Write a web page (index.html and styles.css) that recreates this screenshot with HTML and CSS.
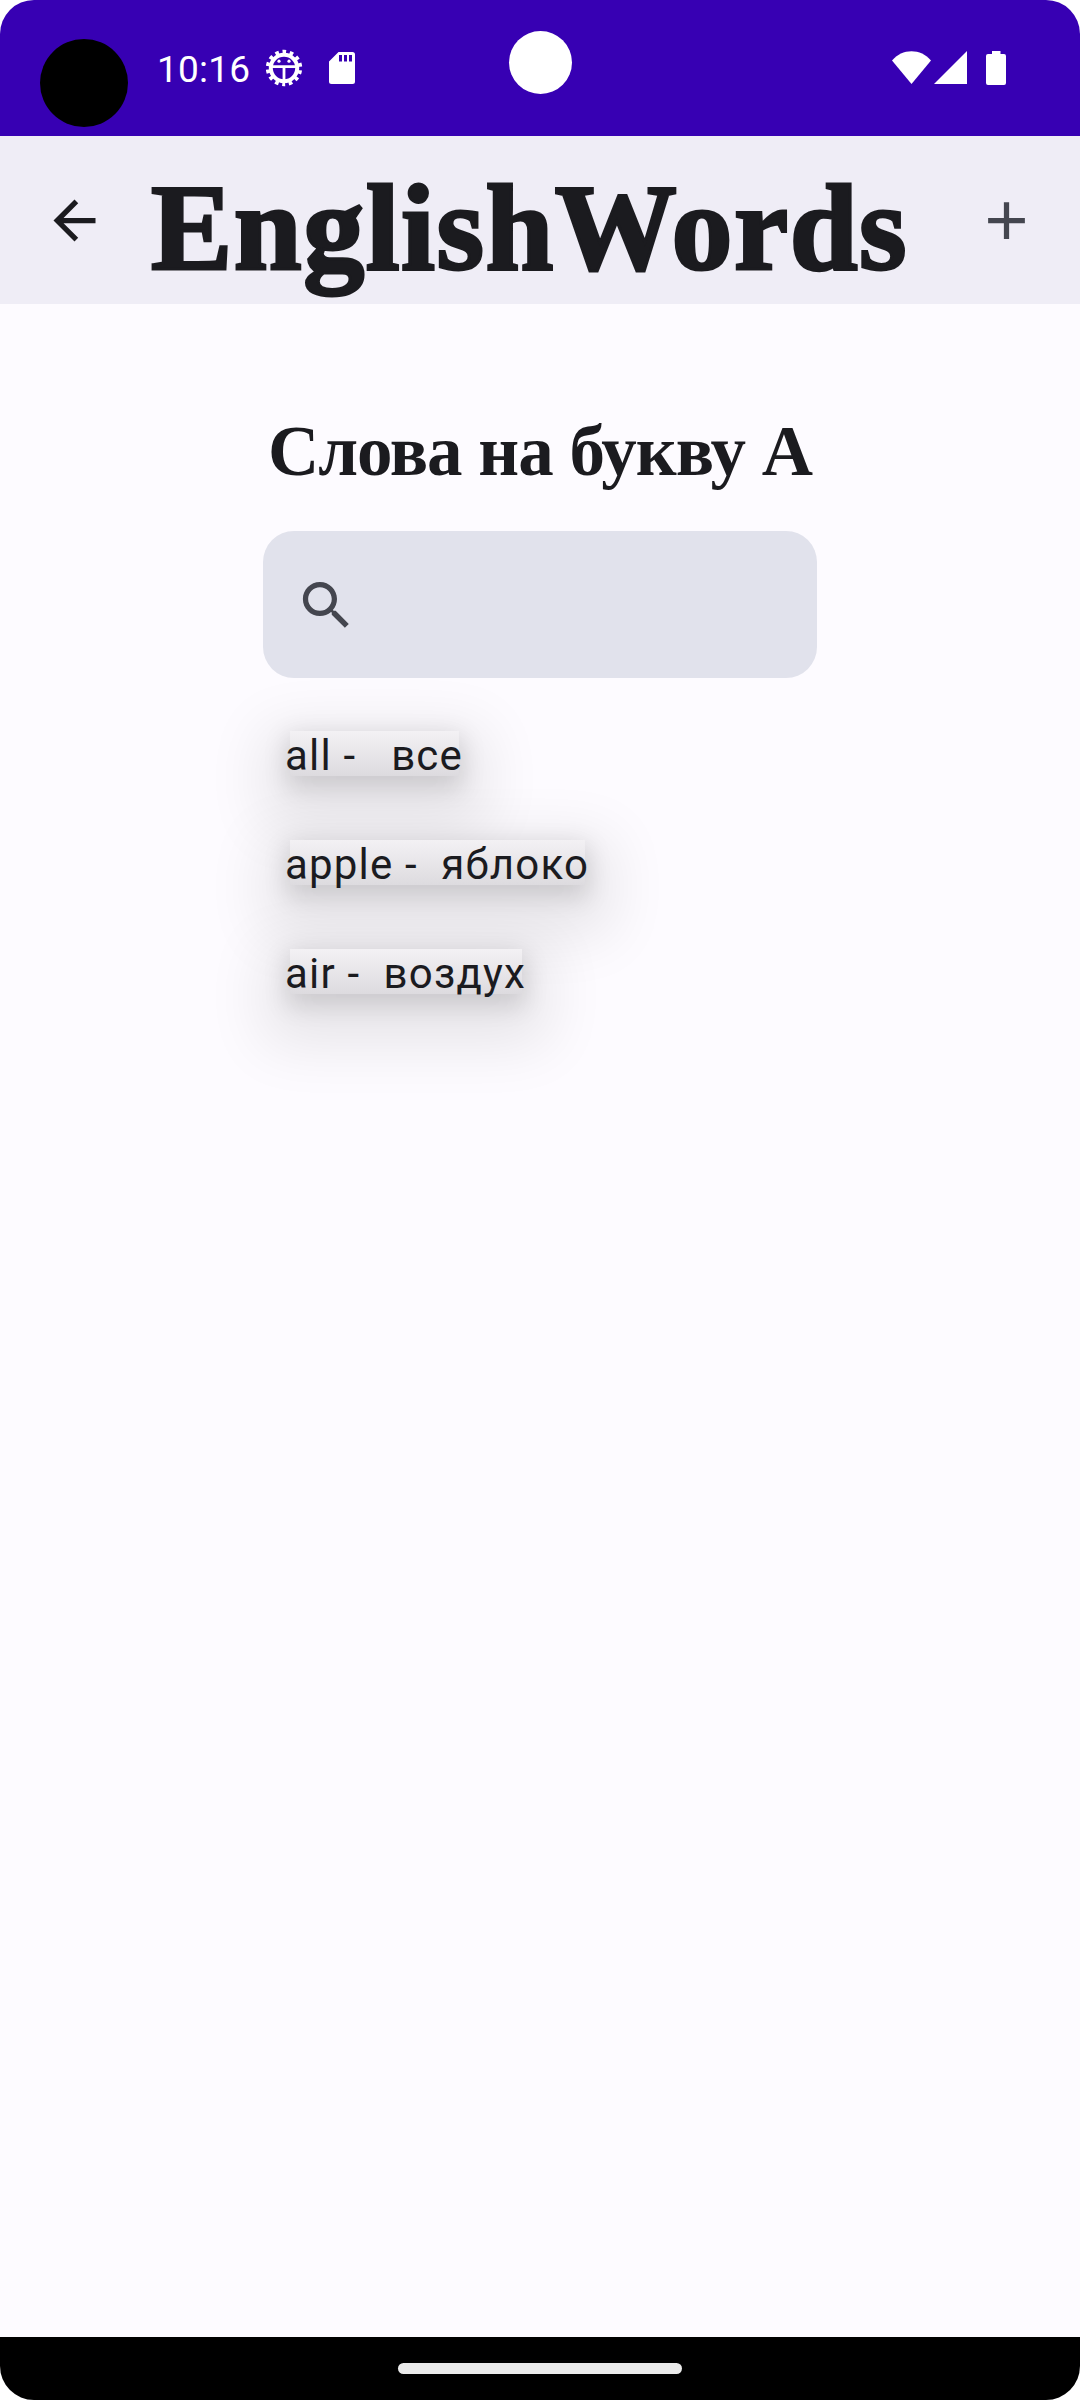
FILE: index.html
```html
<!DOCTYPE html>
<html lang="ru">
<head>
<meta charset="utf-8">
<title>EnglishWords</title>
<link rel="stylesheet" href="styles.css">
</head>
<body>
<div class="screen">
  <header class="status">
    <span class="punch"></span>
    <span class="time">10:16</span>
    <svg class="bug" width="38" height="38" viewBox="-19 -19 38 38">
      <circle r="16" fill="none" stroke="#fff" stroke-width="4.4" stroke-dasharray="3.6 3.58" stroke-dashoffset="1.8" transform="rotate(90)"/>
      <circle r="13.2" fill="none" stroke="#fff" stroke-width="4"/>
      <path d="M-13-1.3H13M0-1.3V13" stroke="#fff" stroke-width="2.8"/>
      <circle cx="-5" cy="-6.8" r="1.600" fill="#fff"/><circle cx="5" cy="-6.8" r="1.600" fill="#fff"/>
    </svg>
    <svg class="card" width="26" height="32" viewBox="0 0 26 32">
      <path fill="#fff" fill-rule="evenodd" d="M9.5 0H23.5A2.5 2.5 0 0 1 26 2.500V29.500A2.500 2.500 0 0 1 23.500 32H2.500A2.500 2.500 0 0 1 0 29.500V9.500ZM10 3V9.600H13V3ZM15 3V9.600H18V3ZM20 3V9.600H23V3Z"/>
    </svg>
    <span class="camera"></span>
    <svg class="signals" width="115" height="34" viewBox="0 0 115 34">
      <path fill="#fff" d="M0 9.500C10-3 29-3 39 9.500L19.500 33Z"/>
      <path fill="#fff" d="M42 33L75 0V33Z"/>
      <path fill="#fff" d="M100 0H108.500V3H112A2 2 0 0 1 114 5V32A2 2 0 0 1 112 34H96A2 2 0 0 1 94 32V5A2 2 0 0 1 96 3H100Z"/>
    </svg>
  </header>
  <nav class="appbar">
    <svg class="icon back" viewBox="0 0 24 24"><path d="M20 11H7.830l5.590-5.590L12 4l-8 8 8 8 1.410-1.410L7.830 13H20v-2z"/></svg>
    <h1 class="title">EnglishWords</h1>
    <svg class="icon add" viewBox="0 0 24 24"><path d="M19 13h-6v6h-2v-6H5v-2h6V5h2v6h6v2z"/></svg>
  </nav>
  <main class="content">
    <h2 class="heading">Слова на букву А</h2>
    <div class="search">
      <svg class="icon" viewBox="0 0 24 24"><path d="M15.500 14h-.79l-.28-.27C15.410 12.590 16 11.110 16 9.500 16 5.910 13.090 3 9.500 3S3 5.910 3 9.500 5.910 16 9.500 16c1.610 0 3.090-.59 4.230-1.570l.27.28v.79l5 4.990L20.490 19l-4.990-5zm-6 0C7.010 14 5 11.990 5 9.500S7.010 5 9.500 5 14 7.010 14 9.500 11.990 14 9.500 14z"/></svg>
    </div>
    <ul class="words">
      <li class="word"><span class="label">all -   все</span></li>
      <li class="word"><span class="label">apple -  яблоко</span></li>
      <li class="word"><span class="label">air -  воздух</span></li>
    </ul>
  </main>
  <footer class="gesture"><span class="pill"></span></footer>
</div>
</body>
</html>
```
FILE: styles.css
```css
* { box-sizing: border-box; margin: 0; padding: 0; }
body { background: #fff; }
.screen {
  width: 1080px; height: 2400px;
  display: flex; flex-direction: column;
  background: #fdfbff; color: #1b1b1f;
  border-radius: 34px; overflow: hidden;
  font-family: Roboto, sans-serif;
}
.status {
  position: relative; height: 136px; flex: none;
  display: flex; align-items: center;
  background: #3700b3; color: #fff;
  padding: 0 73px 0 40px;
}
.punch { width: 88px; height: 88px; border-radius: 50%; background: #000; margin-top: 30px; }
.time { width: 106px; margin-left: 29px; font-size: 37px; line-height: 44px; letter-spacing: .2px; margin-top: 3px; }
.bug { margin-left: 2px; }
.card { margin-left: 26px; }
.camera {
  position: absolute; left: 509px; top: 31px;
  width: 63px; height: 63px; border-radius: 50%; background: #fff;
}
.signals { margin-left: auto; }
.appbar {
  height: 168px; flex: none;
  display: flex; align-items: center; justify-content: space-between;
  background: #efedf6; padding: 0 42px 0 43px;
}
.icon { width: 63px; height: 63px; flex: none; fill: #44464f; }
.back { fill: #1b1b1f; }
.title {
  font: bold 122px/168px "Liberation Serif", serif;
  letter-spacing: 1.5px;
  -webkit-text-stroke: 3px #1b1b1f;
  white-space: nowrap; padding-top: 16px; margin-right: 22px;
}
.content { flex: 1; width: 554px; margin: 0 auto; padding-top: 105px; }
.heading {
  height: 84px; margin-bottom: 38px;
  font: bold 71px/84px "Liberation Serif", serif;
  letter-spacing: -1px;
  text-align: center; white-space: nowrap;
}
.search {
  height: 147px; border-radius: 31px; background: #e1e2ec;
  display: flex; align-items: center; padding: 2px 0 0 32px;
}
.words {
  list-style: none; padding: 53px 0 0 27px;
  display: flex; flex-direction: column; align-items: flex-start; gap: 64px;
}
.word {
  height: 45px;
  box-shadow: 0 8px 24px 3px rgba(0,0,0,.13), 0 24px 60px 26px rgba(0,0,0,.09);
}
.label {
  display: block; height: 45px; margin: 0 -4px 0 -5px;
  background: linear-gradient(#f3f1f4, #dddbdf) 5px 0 / calc(100% - 9px) 100% no-repeat;
  font-size: 42px; line-height: 49px; letter-spacing: 1.2px; white-space: pre;
}
.gesture {
  height: 63px; flex: none; background: #000;
  display: flex; justify-content: center; padding-top: 26px;
}
.pill { width: 284px; height: 11px; border-radius: 6px; background: #ebebeb; }
```
